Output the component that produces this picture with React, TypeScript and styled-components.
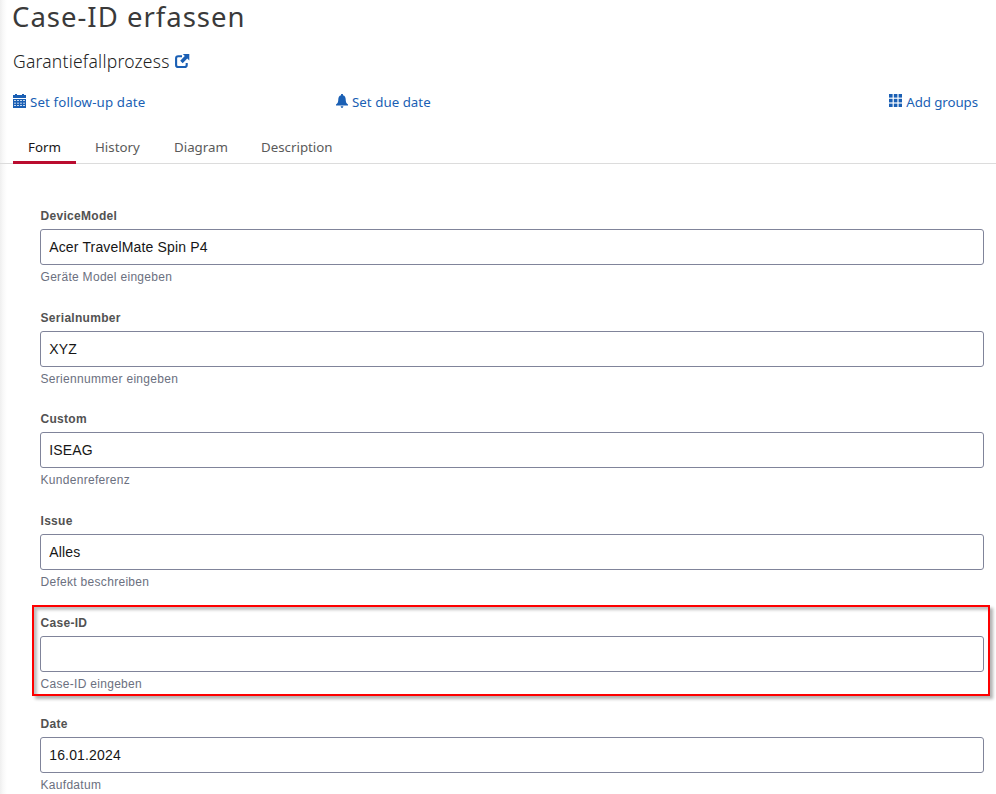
import React from "react";
import styled, { createGlobalStyle, css } from "styled-components";

const GlobalStyle = createGlobalStyle`
  *, *::before, *::after { box-sizing: border-box; }
  html, body { margin: 0; padding: 0; height: 100%; overflow: hidden; background: #fff; }
  #root { height: 100%; }
`;

const uiFont = `"Noto Sans", "Open Sans", sans-serif`;
const formFont = `"Liberation Sans", Arial, sans-serif`;

const Page = styled.main`
  height: 794px;
  font-family: ${uiFont};
  background: linear-gradient(to right, #efefef 0, #f8f8f8 3px, #fff 7px);
`;

const Title = styled.h1`
  margin: 0;
  padding-left: 12px;
  height: 34px;
  font-size: 27.5px;
  font-weight: 400;
  line-height: 34px;
  letter-spacing: 1px;
  color: #3a3a3a;
  white-space: nowrap;
`;

const Subtitle = styled.h2`
  display: flex;
  align-items: center;
  gap: 5px;
  margin: 14px 0 0 13px;
  height: 27px;
  font-size: 17.5px;
  font-weight: 300;
  line-height: 27px;
  letter-spacing: 0.22px;
  color: #222;

  svg { margin-top: -1px; }
`;

const SubtitleText = styled.span`
  width: 157px;
  white-space: nowrap;
`;

const Actions = styled.div`
  display: grid;
  grid-template-columns: 323px 1fr auto;
  align-items: center;
  height: 20px;
  margin: 17px 18px 0 13px;
`;

const Action = styled.a<{ $spacing: number }>`
  display: flex;
  align-items: center;
  gap: 4px;
  font-size: 13.3px;
  line-height: 20px;
  letter-spacing: ${(p) => p.$spacing}px;
  color: #1a5fb4;
  white-space: nowrap;

  svg { margin-top: -3px; flex: none; }
`;

const Tabs = styled.nav`
  display: flex;
  gap: 4px;
  height: 32px;
  margin-top: 20px;
  padding-left: 13px;
  border-bottom: 1px solid #dcdcdc;
`;

const Tab = styled.button<{ $active?: boolean; $width: number }>`
  width: ${(p) => p.$width}px;
  height: 32px;
  padding: 1px 0 0 15px;
  border: 0;
  border-bottom: 3px solid transparent;
  background: none;
  font: 400 13.3px/28px ${uiFont};
  text-align: left;
  white-space: nowrap;
  color: #5a5a5a;
  ${(p) => p.$active && css`
    color: #161616;
    border-bottom-color: #ba0c2f;
  `}
`;

const Form = styled.form`
  padding: 43.9px 12px 0 40px;
`;

const Field = styled.div`
  position: relative;
  height: 101.7px;
  font-family: ${formFont};
`;

const Label = styled.label`
  display: block;
  height: 21px;
  padding-left: 0.5px;
  font-size: 12px;
  font-weight: 700;
  line-height: 16px;
  letter-spacing: 0.3px;
  color: #525252;
`;

const Input = styled.input`
  display: block;
  width: 100%;
  height: 36px;
  padding: 0 8px 0 8.2px;
  border: 1px solid #80849a;
  border-radius: 3px;
  outline: none;
  background: #fff;
  font: 400 14px/18px ${formFont};
  letter-spacing: 0.16px;
  color: #161616;
`;

const Help = styled.div`
  margin-top: 4px;
  padding-left: 0.5px;
  font-size: 12px;
  line-height: 16px;
  letter-spacing: 0.3px;
  color: #6b7080;
`;

const Highlight = styled.div`
  position: absolute;
  top: -9.7px;
  left: -8px;
  right: -6px;
  height: 91px;
  border: 2px solid #fe0000;
  box-shadow: 3px 3px 3px rgba(0, 0, 0, 0.3), inset 3px 3px 3px rgba(0, 0, 0, 0.25);
  pointer-events: none;
`;

const ExternalIcon = () => (
  <svg width="15" height="15" viewBox="0 0 15 15" fill="none">
    <path d="M7 2.2H3.2Q1.1 2.2 1.1 4.3V10.9Q1.1 13 3.2 13H9.6Q11.7 13 11.7 10.9V9" stroke="#1a5fb4" strokeWidth="2.1" />
    <path d="M7.8 0H14.3V6.5L12.3 4.5L7.7 9.2L5.2 6.7L9.8 2Z" fill="#1a5fb4" />
  </svg>
);

const CalendarIcon = () => (
  <svg width="13" height="14" viewBox="0 0 13 14" fill="#1a5fb4">
    <path d="M2 0H4V1H9V0H11V1H13V4H0V1H2Z" />
    <path fillRule="evenodd" d="M0 5H13V14H0ZM1 6.2V7H3V6.2ZM4 6.2V7H6V6.2ZM7 6.2V7H9V6.2ZM10 6.2V7H12V6.2ZM1 8.7V9.5H3V8.7ZM4 8.7V9.5H6V8.7ZM7 8.7V9.5H9V8.7ZM10 8.7V9.5H12V8.7ZM1 11.2V12H3V11.2ZM4 11.2V12H6V11.2ZM7 11.2V12H9V11.2ZM10 11.2V12H12V11.2Z" />
  </svg>
);

const BellIcon = () => (
  <svg width="12" height="14" viewBox="0 0 13 14" preserveAspectRatio="none" fill="#1a5fb4">
    <path d="M5.5 0H7.5V1.2C9.7 1.7 10.4 3.3 10.5 5.2C10.6 8 11 9 13 10.5V11.5H0V10.5C2 9 2.4 8 2.5 5.2C2.6 3.3 3.3 1.7 5.5 1.2ZM5 12.2H8Q7.8 14 6.5 14Q5.2 14 5 12.2Z" />
  </svg>
);

const GridIcon = () => (
  <svg width="13" height="13" viewBox="0 0 13 13" fill="#1a5fb4">
    {[0, 4.8, 9.6].map((y) => [0, 4.8, 9.6].map((x) => (
      <rect key={`${x}-${y}`} x={x} y={y} width="3.6" height="3.6" />
    )))}
  </svg>
);

const tabs = [
  { name: "Form", width: 63 },
  { name: "History", width: 75 },
  { name: "Diagram", width: 83 },
  { name: "Description", width: 102 },
];

const fields = [
  { label: "DeviceModel", value: "Acer TravelMate Spin P4", help: "Geräte Model eingeben" },
  { label: "Serialnumber", value: "XYZ", help: "Seriennummer eingeben" },
  { label: "Custom", value: "ISEAG", help: "Kundenreferenz" },
  { label: "Issue", value: "Alles", help: "Defekt beschreiben" },
  { label: "Case-ID", value: "", help: "Case-ID eingeben", highlighted: true },
  { label: "Date", value: "16.01.2024", help: "Kaufdatum" },
];

export default function App() {
  return (
    <>
      <GlobalStyle />
      <Page>
        <Title>Case-ID erfassen</Title>
        <Subtitle>
          <SubtitleText>Garantiefallprozess</SubtitleText>
          <ExternalIcon />
        </Subtitle>
        <Actions>
          <Action $spacing={0.14}><CalendarIcon />Set follow-up date</Action>
          <Action $spacing={0.03}><BellIcon />Set due date</Action>
          <Action $spacing={-0.08}><GridIcon />Add groups</Action>
        </Actions>
        <Tabs>
          {tabs.map((t, i) => (
            <Tab key={t.name} $active={i === 0} $width={t.width}>{t.name}</Tab>
          ))}
        </Tabs>
        <Form>
          {fields.map((f) => (
            <Field key={f.label}>
              <Label htmlFor={f.label}>{f.label}</Label>
              <Input id={f.label} defaultValue={f.value} />
              <Help>{f.help}</Help>
              {f.highlighted && <Highlight />}
            </Field>
          ))}
        </Form>
      </Page>
    </>
  );
}
